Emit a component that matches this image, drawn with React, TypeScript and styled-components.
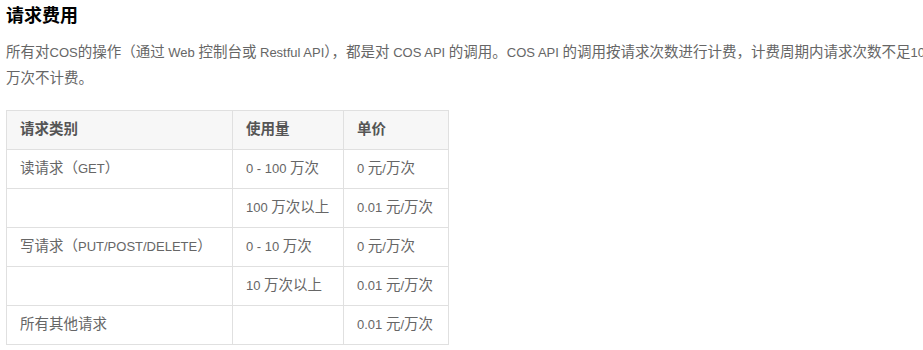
import React from "react";
import styled, { createGlobalStyle } from "styled-components";

const Global = createGlobalStyle`
  html, body { margin: 0; padding: 0; background: #fff; overflow: hidden; }
  body { font-family: "Liberation Sans", Arial, "Noto Sans CJK SC", sans-serif; }
`;

const Page = styled.div`
  padding: 4px 0 0 6px;
  width: 934px;
`;

const Title = styled.h3`
  margin: 0;
  font-size: 18px;
  line-height: 24px;
  font-weight: bold;
  color: #000;
`;

const Para = styled.p`
  margin: 12px 0 0;
  font-size: 13px;
  line-height: 26px;
  color: #666;
`;

const Cjk = styled.span`
  font-family: "Noto Sans CJK SC", sans-serif;
  font-size: 14.5px;
  line-height: 1;
`;

const Table = styled.table`
  margin-top: 18px;
  border-collapse: collapse;
  font-size: 13px;
  line-height: 20px;
  color: #666;
`;

const Th = styled.th<{ $w: number }>`
  width: ${(p) => p.$w}px;
  height: 39px;
  padding: 0 13px;
  box-sizing: border-box;
  text-align: left;
  font-weight: bold;
  color: #555;
  background: #f7f7f7;
  border: 1px solid #e0e0e0;
`;

const Td = styled.td`
  height: 39px;
  padding: 0 13px;
  box-sizing: border-box;
  border: 1px solid #e0e0e0;
`;

function Mixed({ text }: { text: string }) {
  const parts = text.split(/([\u3000-\u9fff\uff00-\uffef]+)/);
  return (
    <>
      {parts.map((p, i) =>
        /^[\u3000-\u9fff\uff00-\uffef]+$/.test(p) ? <Cjk key={i}>{p}</Cjk> : <React.Fragment key={i}>{p}</React.Fragment>
      )}
    </>
  );
}

const rows: [string, string, string][] = [
  ["读请求（GET）", "0 - 100 万次", "0 元/万次"],
  ["", "100 万次以上", "0.01 元/万次"],
  ["写请求（PUT/POST/DELETE）", "0 - 10 万次", "0 元/万次"],
  ["", "10 万次以上", "0.01 元/万次"],
  ["所有其他请求", "", "0.01 元/万次"],
];

const heads: [string, number][] = [
  ["请求类别", 226],
  ["使用量", 111],
  ["单价", 105],
];

export default function App() {
  return (
    <Page>
      <Global />
      <Title>请求费用</Title>
      <Para>
        <Mixed text="所有对COS的操作（通过 Web 控制台或 Restful API），都是对 COS API 的调用。COS API 的调用按请求次数进行计费，计费周期内请求次数不足100万次不计费。" />
      </Para>
      <Table>
        <thead>
          <tr>
            {heads.map(([h, w]) => (
              <Th key={h} $w={w}>
                <Mixed text={h} />
              </Th>
            ))}
          </tr>
        </thead>
        <tbody>
          {rows.map((r, i) => (
            <tr key={i}>
              {r.map((c, j) => (
                <Td key={j}>
                  <Mixed text={c} />
                </Td>
              ))}
            </tr>
          ))}
        </tbody>
      </Table>
    </Page>
  );
}
